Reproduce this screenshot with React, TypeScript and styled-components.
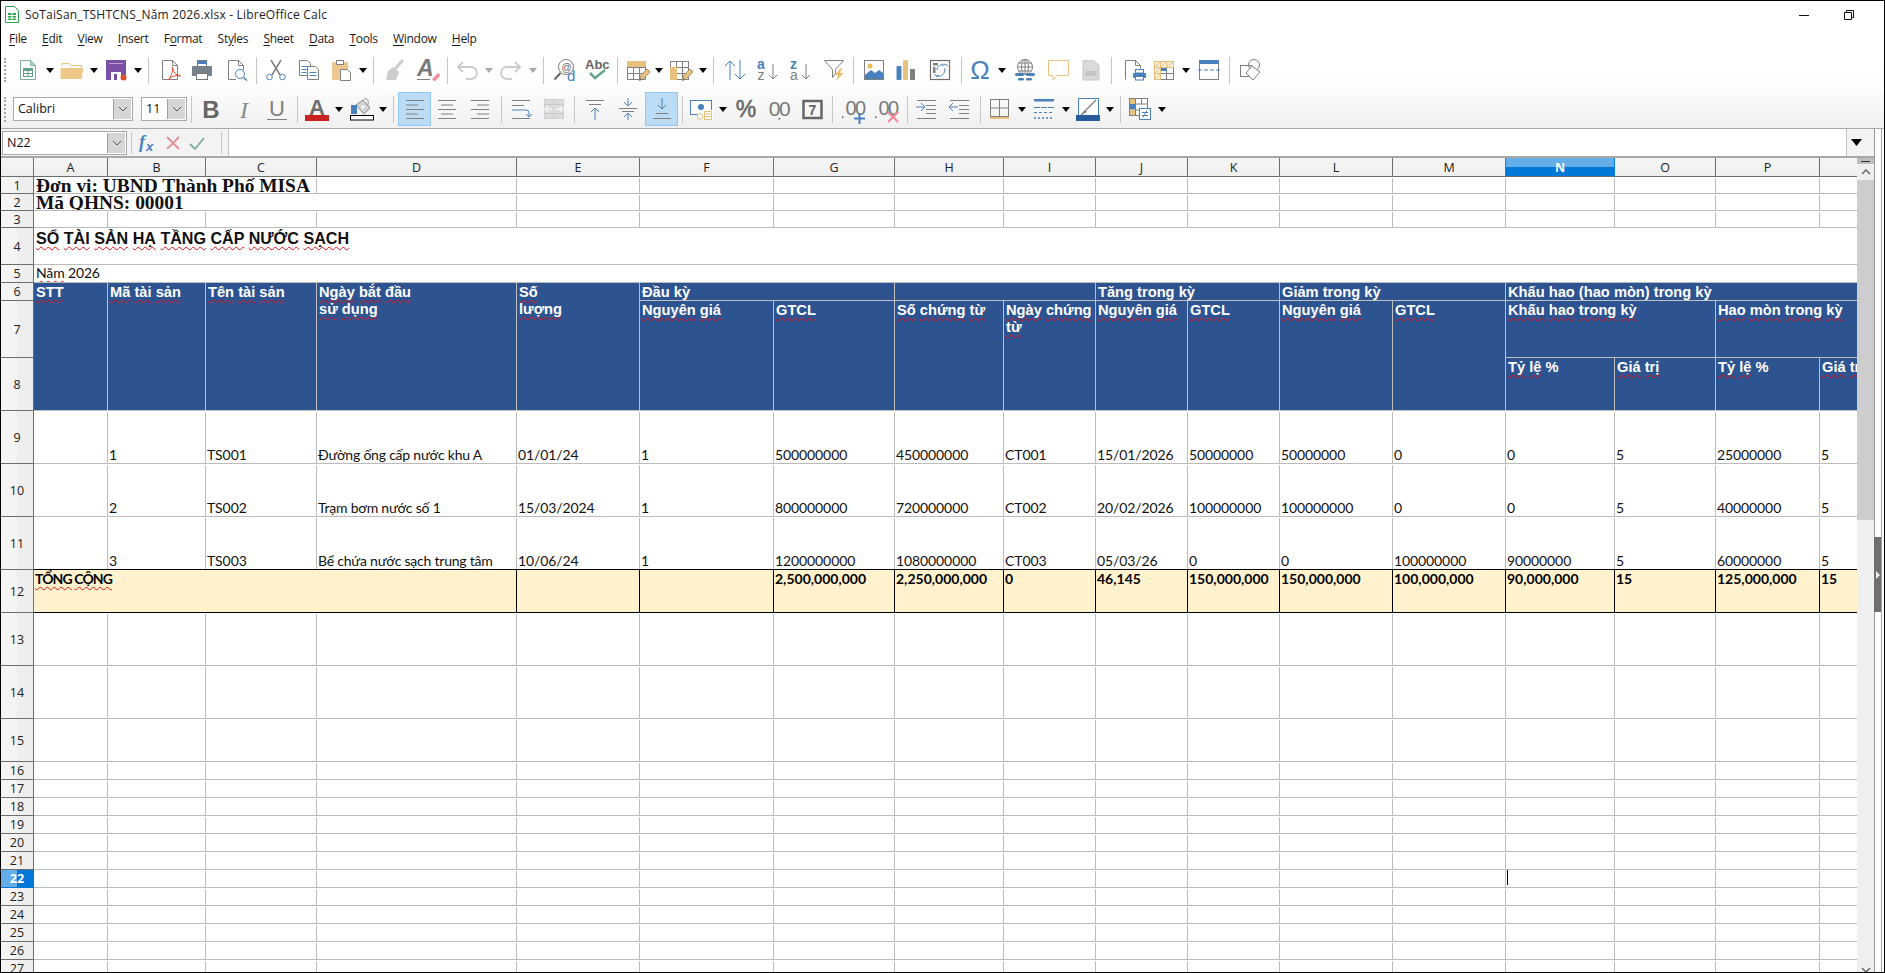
import React from 'react';
import styled, { createGlobalStyle } from 'styled-components';

const GlobalStyle = createGlobalStyle`
  html, body { margin: 0; padding: 0; background: #fff; overflow: hidden; }
  svg text { font-family: "Liberation Sans", Arial, sans-serif; }
`;

const UI = `"Open Sans", "Noto Sans", sans-serif`;
const DATA = `"Lato", "Liberation Sans", sans-serif`;

const Window = styled.div`
  width: 1885px; height: 973px; box-sizing: border-box; border: 1px solid #000;
  display: flex; flex-direction: column; overflow: hidden; background: #fff; color: #000;
`;
const TitleBar = styled.div`
  height: 27px; flex: none; display: flex; align-items: center; padding-left: 4px; gap: 6px;
  font: 12px ${UI}; color: #222;
`;
const TitleText = styled.span`flex: 1; letter-spacing: 0.2px;`;
const WinBtn = styled.span<{ $w: number }>`width: ${p => p.$w}px; display: flex; justify-content: center; align-items: center;`;
const MenuBar = styled.div`
  height: 22px; flex: none; display: flex; align-items: center; gap: 15.3px; padding-left: 8px;
  font: 12px ${UI}; color: #1a1a1a; padding-bottom: 2px; box-sizing: border-box; letter-spacing: -0.3px;
`;
const MenuItem = styled.span`u { text-underline-offset: 2px; }`;
const Dock = styled.div`
  flex: none; border-bottom: 1px solid #a8a8a8;
  background: linear-gradient(#fff 0%, #fefefe 45%, #f0f0f0 100%);
`;
const ToolRow = styled.div<{ $h: number }>`height: ${p => p.$h}px; display: flex; align-items: center;`;
const Slot = styled.div<{ $gap: number; $w: number }>`
  flex: none; margin-left: ${p => p.$gap}px; width: ${p => p.$w}px;
  display: flex; align-items: center; justify-content: center;
  svg { display: block; overflow: visible; flex: none; }
`;
const Grip = styled.div<{ $h: number }>`width: 0; height: ${p => p.$h}px; border-left: 2px dotted #a5a5a5;`;
const Sep = styled.div`width: 1px; height: 27px; background: #c6c6c6;`;
const Arrow = styled.div<{ $off?: boolean }>`
  width: 0; height: 0; border-left: 4.5px solid transparent; border-right: 4.5px solid transparent;
  border-top: 5px solid ${p => (p.$off ? '#aaa' : '#000')};
`;
const Active = styled.div`
  width: 33px; height: 34px; box-sizing: border-box; background: #bcdcf5; border: 1px solid #92c8f4;
  display: flex; align-items: center; justify-content: center;
`;
const Combo = styled.div<{ $w: number; $h?: number }>`
  width: ${p => p.$w}px; height: ${p => p.$h ?? 24}px; box-sizing: border-box; border: 1px solid #a8a8a8; background: #fff;
  display: flex; align-items: stretch; font: 12.5px ${UI}; color: #111;
`;
const ComboText = styled.span`flex: 1; padding-left: 4px; line-height: 22px;`;
const ComboBtn = styled.span`
  width: 18px; flex: none; background: #d6d6d6; border-left: 1px solid #a0a0a0; box-sizing: border-box;
  display: flex; align-items: center; justify-content: center; margin: 1px 1px 1px 0;
`;

const Body = styled.div`flex: 1; min-height: 0; display: flex;`;
const MainCol = styled.div`width: 1873px; flex: none; display: flex; flex-direction: column; min-height: 0;`;
const FormulaBar = styled.div`
  height: 29px; flex: none; box-sizing: border-box; border-bottom: 2px solid #a8a8a8; display: flex; align-items: stretch;
`;
const FormulaTools = styled.div`
  width: 228px; flex: none; box-sizing: border-box; background: #f3f3f3; border-right: 1px solid #c4c4c4;
  display: flex; align-items: center; padding-left: 1px;
`;
const FxIcons = styled.div`display: flex; align-items: center; margin-left: 7px; gap: 8px; svg { display: block; }`;
const FxSep = styled.div<{ $l: number }>`width: 1px; height: 22px; background: #c6c6c6; margin-left: ${p => p.$l}px;`;
const FormulaInput = styled.div`flex: 1; background: #fff;`;
const FormulaDrop = styled.div`
  width: 28px; flex: none; box-sizing: border-box; background: #f3f3f3; border-left: 1px solid #c4c4c4;
  display: flex; align-items: center; justify-content: center; padding-right: 8px;
`;
const SheetRow = styled.div`flex: 1; min-height: 0; display: flex;`;
const SheetView = styled.div`width: 1856px; flex: none; overflow: hidden;`;
const Grid = styled.div`
  display: grid;
  grid-template-columns: 33px 74px 98px 111px 200px 123px 134px 121px 109px 92px 92px 92px 113px 113px 109px 101px 104px 100px;
  grid-template-rows: 19px 17px 17px 17px 37px 18px 18px 57px 53px 53px 53px 53px 43px 53px 53px 43px repeat(12, 18px);
`;
const HeadCell = styled.div<{ $on?: boolean }>`
  box-sizing: border-box; border-right: 1px solid ${p => (p.$on ? '#0078d7' : '#6e6e6e')}; border-bottom: 1px solid #6e6e6e;
  display: flex; align-items: center; justify-content: center; font: ${p => (p.$on ? 700 : 400)} 12.5px ${UI};
  color: ${p => (p.$on ? '#fff' : '#222')}; padding-top: 1px;
  background: ${p => (p.$on ? 'linear-gradient(#63ade8 0 50%, #0078d7 50% 100%)' : 'linear-gradient(#f6f6f6, #eeeeee)')};
`;
const RowHead = styled.div<{ $on?: boolean }>`
  box-sizing: border-box; border-right: 1px solid ${p => (p.$on ? '#0078d7' : '#6e6e6e')}; border-bottom: 1px solid ${p => (p.$on ? '#0078d7' : '#6e6e6e')};
  display: flex; align-items: center; justify-content: center; font: ${p => (p.$on ? 700 : 400)} 12.5px ${UI};
  color: ${p => (p.$on ? '#fff' : '#222')};
  background: ${p => (p.$on ? 'linear-gradient(90deg, #63ade8 0 50%, #0078d7 50% 100%)' : 'linear-gradient(90deg, #f4f4f4 0 50%, #eeeeee 50% 100%)')};
`;
const Cell = styled.div<{ $col?: number; $row?: number; $span?: number; $rows?: number; $end?: boolean; $black?: boolean }>`
  box-sizing: border-box; min-width: 0; overflow: hidden; padding: 0 0 0 1px; white-space: nowrap;
  ${p => (p.$col ? `grid-column: ${p.$col} / span ${p.$span ?? 1};` : '')}
  ${p => (p.$row ? `grid-row: ${p.$row} / span ${p.$rows ?? 1};` : '')}
  border-bottom: 1px solid ${p => (p.$black ? '#000' : '#bcbcbc')};
  background: linear-gradient(#bcbcbc, #bcbcbc) right bottom / 1px calc(100% - 1px) no-repeat;
  font: 400 14px/17px ${DATA}; color: #111; letter-spacing: -0.1px;
  display: flex; flex-direction: column; justify-content: ${p => (p.$end ? 'flex-end' : 'flex-start')};
`;
const YearCell = styled(Cell)`padding: 0 0 1px 2px; letter-spacing: -0.15px;`;
const BannerCell = styled(Cell)`
  font: 700 19.4px/18px "Liberation Serif", "Times New Roman", serif; padding-left: 2px; letter-spacing: 0;
`;
const TitleCell = styled(Cell)`
  font: 700 16.1px/20px "Liberation Sans", Arial, sans-serif; letter-spacing: 0; padding: 0 0 0 2px;
`;
const NavyCell = styled.div<{ $col: number; $row: number; $span?: number; $rows?: number }>`
  box-sizing: border-box; min-width: 0; overflow: hidden; padding: 1px 0 0 2px;
  grid-column: ${p => p.$col} / span ${p => p.$span ?? 1}; grid-row: ${p => p.$row} / span ${p => p.$rows ?? 1};
  background: #2d5391; border-right: 1px solid #c0c0c0; border-bottom: 1px solid #c0c0c0;
  color: #fff; font: 700 14.67px/17px "Liberation Sans", Arial, sans-serif;
`;
const NavyLine = styled.div`white-space: nowrap;`;
const TotalCell = styled.div<{ $col: number; $span?: number }>`
  grid-column: ${p => p.$col} / span ${p => p.$span ?? 1}; grid-row: 13;
  box-sizing: border-box; min-width: 0; overflow: hidden; white-space: nowrap; padding-left: 1px;
  background: #fff2cc; border-right: 1px solid #000; border-bottom: 1px solid #000;
  font: 700 14px/17px ${DATA}; color: #000;
`;
const Tight = styled.span<{ $track: number }>`letter-spacing: ${p => p.$track}px;`;
const Wavy = styled.span`
  text-decoration: underline wavy #e0141c 1px; text-underline-offset: 2px; text-decoration-skip-ink: none;
`;
const Caret = styled.span`display: block; width: 1px; height: 15px; background: #000; margin: 0;`;

const ScrollBar = styled.div`width: 17px; flex: none; background: #f0f0f0; display: flex; flex-direction: column;`;
const ScrollHandle = styled.div`height: 6px; flex: none; background: #bdbdbd; display: flex; align-items: center; justify-content: center;`;
const ScrollDash = styled.span`width: 9px; height: 1px; background: #333;`;
const ScrollUp = styled.div`height: 16px; flex: none; display: flex; align-items: center; justify-content: center;`;
const ScrollThumb = styled.div`height: 340px; flex: none; background: #cdcdcd;`;
const ScrollTrack = styled.div`flex: 1;`;
const ScrollDown = styled.div`height: 5px; flex: none; display: flex; justify-content: center; overflow: hidden;`;
const Strip = styled.div`
  flex: 1; box-sizing: border-box; border-left: 1px solid #9a9a9a; position: relative;
  background: linear-gradient(#a8a8a8, #a8a8a8) 6px 0 / 1px 100% no-repeat;
`;
const StripHandle = styled.div`
  position: absolute; left: -1px; top: 408px; width: 7px; height: 75px; background: #6e6e6e;
  display: flex; align-items: center; justify-content: center;
`;
const StripArrow = styled.span`
  width: 0; height: 0; border-left: 4px solid #eee; border-top: 4px solid transparent; border-bottom: 4px solid transparent;
`;

const G = '#808080', B = '#4a81bd', O = '#e9c17f', L = '#cdcdcd';
const S: React.FC<{ children: React.ReactNode }> = ({ children }) => (
  <svg width="24" height="24" viewBox="0 0 24 24" fill="none" strokeWidth="1">{children}</svg>
);
const hl = (y: number, x: number, w: number, c = G, h = 1) => <rect key={`${y}-${x}`} x={x} y={y} width={w} height={h} fill={c} />;
const pencil = <><path d="M13.5 22.5l1-5 6.5-6.5 3 3-6.5 6.5z" fill={O} stroke="#a98f68" /><path d="M13.5 22.5l1-2.5 1.5 1.5z" fill="#666" /></>;
const table = (
  <>
    <rect x="1.5" y="3.5" width="18" height="18" fill="#fff" stroke={G} />
    {[9.5, 15.5].map(y => <path key={y} d={`M1.5 ${y}h18`} stroke={G} />)}
    {[7.5, 13.5].map(x => <path key={x} d={`M${x} 3.5v18`} stroke={G} />)}
  </>
);

const icons: Record<string, React.ReactNode> = {
  new: <S><path d="M4.5 2.5h10l5 5v14h-15z" fill="#fff" stroke="#7fb09b" /><path d="M14.5 2.5v5h5z" fill="#b9d5c9" stroke="#7fb09b" /><rect x="7.5" y="10.5" width="9" height="8" fill="#fff" stroke="#62a088" /><rect x="7" y="10" width="10" height="3" fill="#62a088" /><path d="M12 13v5M8 15.5h8" stroke="#62a088" /></S>,
  open: <S><path d="M2 8V5.5h7l2 2h10.5V10" stroke={O} /><path d="M.5 10h23l-2 11H.5z" fill="#efc789" /></S>,
  save: <S><rect x="2" y="2" width="20" height="20" fill="#7b4fa6" /><rect x="5" y="5" width="14" height="1" fill="#b9a1d3" /><rect x="7" y="14" width="10" height="8" fill="#fff" /><rect x="10" y="16" width="3" height="6" fill="#7b4fa6" /><circle cx="19.5" cy="19.5" r="3" fill="#e0502f" /></S>,
  pdf: <S><path d="M3.5 2.5h10l5 5v14h-15z" fill="#fff" stroke={G} /><path d="M13.5 2.5v5h5" stroke={G} /><path d="M9 22c3-3 5-8 4.500-13 .5 5 3 8 8 9-5-1-9 0-12.500 4z" stroke="#e0472e" /></S>,
  print: <S><rect x="7.500" y="2.500" width="9" height="7" fill="#fff" stroke="#777" /><rect x="7" y="3" width="10" height="3" fill={B} /><rect x="2" y="8" width="20" height="10" rx="1" fill="#77818c" /><rect x="6.500" y="15.500" width="11" height="6" fill="#fff" stroke="#777" /></S>,
  preview: <S><path d="M3.500 2.500h10l5 5v5M11 21.500H3.500v-19" stroke={G} fill="#fff" /><path d="M13.500 2.500v5h5" stroke={G} /><circle cx="15" cy="16" r="4.500" stroke={B} fill="#fff" /><path d="M18.500 19.500l3.500 3" stroke={B} strokeWidth="1.500" /></S>,
  cut: <S><path d="M7 2l9 15M17 2L8 17" stroke={G} strokeWidth="1.500" /><circle cx="5.500" cy="19" r="2.800" stroke={B} /><circle cx="18.500" cy="19" r="2.800" stroke={B} /></S>,
  copy: <S><path d="M2.500 2.500h8l3 3v12h-11z" fill="#fff" stroke={G} /><path d="M4.500 8.500h6M4.500 11.500h6M4.500 14.500h5" stroke={B} /><path d="M10.500 8.500h8l3 3v10h-11z" fill="#fff" stroke={G} /><path d="M12.500 14.500h7M12.500 17.500h7" stroke={B} /></S>,
  paste: <S><rect x="2" y="4" width="16" height="18" fill="#edc88e" /><rect x="6.500" y="2.500" width="7" height="4" fill="#fff" stroke={G} /><path d="M10.500 11.500h7l3 3v8h-10z" fill="#fff" stroke={G} /></S>,
  clone: <S><path d="M20 2l-8 9" stroke={L} strokeWidth="3" /><path d="M5 13l5-4 6 5-3 8H3z" fill={L} /></S>,
  clear: <S><text x="1" y="18" fontSize="23" fontStyle="italic" fontWeight="700" fill="#7a7a7a">A</text><path d="M16 21l6-6 2.500 2.500-6 6z" fill="#f08ea0" /><path d="M1 21.500h13" stroke={G} /></S>,
  undo: <S><path d="M3 9h13a5.500 5.500 0 0 1 0 12h-5M8 4L3 9l5 5" stroke={L} strokeWidth="1.800" /></S>,
  redo: <S><path d="M21 9H8a5.500 5.500 0 0 0 0 12h5M16 4l5 5-5 5" stroke={L} strokeWidth="1.800" /></S>,
  find: <S><circle cx="13" cy="9" r="7.500" stroke={G} /><path d="M7.500 15L1.500 21.500" stroke="#666" strokeWidth="2" /><text x="8.500" y="12.500" fontSize="10" fill="#666">@</text><text x="14" y="23" fontSize="15" fill={B}>d</text></S>,
  spell: <S><text x="0" y="11" fontSize="13" fontWeight="700" fill="#666">Abc</text><path d="M5 15l5 5 10-8" stroke="#67a58c" strokeWidth="2.500" /></S>,
  row: <S>{table}<rect x="1" y="3" width="19" height="6" fill={O} />{pencil}</S>,
  col: <S>{table}<rect x="1" y="9" width="7" height="13" fill={O} />{pencil}</S>,
  sort: <S><path d="M7 22V3M2 8l5-5 5 5M17 2v19M12 16l5 5 5-5" stroke={B} /></S>,
  asc: <S><text x="1" y="10.500" fontSize="14" fontWeight="700" fill={B}>a</text><text x="1.500" y="22" fontSize="14" fill={G}>z</text><path d="M17 6v15M13 17l4 4 4-4" stroke={G} /></S>,
  desc: <S><text x="1" y="10.500" fontSize="14" fontWeight="700" fill={B}>z</text><text x="1" y="22" fontSize="14" fill={G}>a</text><path d="M17 6v15M13 17l4 4 4-4" stroke={G} /></S>,
  filter: <S><path d="M2.500 2.500h19l-8 9v4l-3 4v-8z" stroke={G} fill="#fff" /><path d="M19 10l-6 7h3.500l-3 6 8-8h-4l3-5z" fill="#efb95c" /></S>,
  image: <S><rect x="2.500" y="2.500" width="19" height="19" stroke={G} fill="#fff" /><circle cx="8" cy="8" r="2.500" fill="#efb95c" /><path d="M3 21v-4l6-5 4 3 4-3 4 3v6z" fill={B} /></S>,
  chart: <S><rect x="2.500" y="8" width="5" height="14" rx="1" fill={B} /><rect x="9" y="2" width="5" height="20" rx="1" fill={O} /><rect x="16" y="11" width="5" height="11" fill={G} /></S>,
  pivot: <S><rect x="2.500" y="2.500" width="19" height="19" stroke="#6e6e6e" strokeWidth="1.200" /><path d="M5 5h5v2.500H5zM5 9h2.500v6H5z" fill={G} /><path d="M8 18c6 1 9-2 9-8M14 8l3-2 3 2M9 12c0-3 2-5 6-6M6.500 16l2 2.500 2.500-1.500" stroke={B} /></S>,
  omega: <S><text x="12" y="21" textAnchor="middle" fontSize="26" fill={B}>Ω</text></S>,
  link: <S><circle cx="12" cy="9" r="7.500" stroke={G} /><ellipse cx="12" cy="9" rx="3.500" ry="7.500" stroke={G} /><path d="M4.500 9h15M12 1.500V16M5.500 5h13M5.500 13h13" stroke={G} /><rect x="2" y="15" width="9" height="3" rx="1.500" fill={B} /><rect x="13" y="15" width="9" height="3" rx="1.500" fill={B} /><rect x="5" y="20" width="6" height="2.500" rx="1.200" fill={B} /><rect x="13" y="20" width="6" height="2.500" rx="1.200" fill={B} /></S>,
  comment: <S><path d="M2.500 2.500h20v15H11l-4 4.500v-4.500H2.500z" stroke={O} fill="#fff" /></S>,
  headers: <S><path d="M4 2.500h11l5 5v14.500H4z" fill="#d9d9d9" stroke="#cacaca" /><rect x="6.500" y="13" width="11" height="5" fill="#c4c4c4" /></S>,
  area: <S><path d="M3.500 21.500v-19h10l5 5v3" stroke={G} fill="#fff" /><path d="M13.500 2.500v5h5" stroke={G} /><rect x="11" y="15" width="13" height="5" rx="1" fill={B} /><rect x="13.500" y="11.500" width="8" height="3.500" fill="#fff" stroke={B} /><rect x="13.500" y="18.500" width="8" height="3.500" fill="#fff" stroke={B} /></S>,
  freeze: <S><rect x="2.500" y="3.500" width="19" height="18" stroke={G} fill="#fff" /><path d="M8.500 9.500h13M8.500 15.500h13M14.500 9.500v12" stroke={G} /><path d="M2.500 3.500h19v6h-13v12h-6z" fill="#fbeed7" stroke={O} /><path d="M2.500 9.500h6M2.500 15.500h6M8.500 3.500v6M15 3.500v6M3 9l5-5M9 9l5-5M15 9l6-5M3 15l5-5M3 21l5-5" stroke={O} /><rect x="9" y="10" width="6" height="3" fill={B} /></S>,
  split: <S><rect x="2.500" y="2.500" width="19" height="19" stroke={G} /><rect x="2" y="2" width="20" height="4" fill={B} /><path d="M1 12h22" stroke={B} strokeDasharray="4 2" /></S>,
  shapes: <S><rect x="2.500" y="7.500" width="11" height="11" stroke={G} /><circle cx="16" cy="7" r="5.500" stroke={G} /><path d="M14 8l8 6-7 8-7-7z" stroke={G} fill="#fff" /></S>,
  bold: <S><text x="12" y="21" textAnchor="middle" fontSize="24" fontWeight="700" fill="#666">B</text></S>,
  italic: <S><text x="12" y="21" textAnchor="middle" fontSize="24" fontStyle="italic" fill="#8a8a8a" style={{ fontFamily: '"Liberation Serif", serif' }}>I</text></S>,
  underline: <S><text x="12" y="19" textAnchor="middle" fontSize="22" fill="#808080">U</text><path d="M2 22.500h20" stroke="#808080" /></S>,
  fcolor: <S><text x="12" y="17.500" textAnchor="middle" fontSize="22" fontWeight="700" fill="#6e6e6e">A</text><rect x="0" y="18" width="24" height="6" fill="#c9211e" /></S>,
  bgcolor: <S><rect x="1.500" y="18.500" width="23" height="4.500" fill="#fff" stroke="#000" /><path d="M7 8l7-5 7 8-6 6z" fill="#d4d4d4" stroke="#888" /><rect x="2" y="8" width="6" height="9" fill={B} /><path d="M15 2c3-1 5 1 4 6" stroke="#888" /><circle cx="14" cy="10" r="1.500" fill="#fff" /></S>,
  left: <S>{[3, 7.500, 12, 16.500, 21].map((y, i) => hl(y, 3, i % 2 ? 12 : 18))}</S>,
  center: <S>{[3, 7.500, 12, 16.500, 21].map((y, i) => hl(y, i % 2 ? 6 : 3, i % 2 ? 12 : 18))}</S>,
  right: <S>{[3, 7.500, 12, 16.500, 21].map((y, i) => hl(y, i % 2 ? 9 : 3, i % 2 ? 12 : 18))}</S>,
  wrap: <S>{hl(3, 3, 18)}{hl(8, 3, 12)}{hl(21, 3, 18)}<path d="M3 13h14a3 3 0 0 1 3 3v3M17 17l3 3 3-3" stroke={B} /></S>,
  merge: <S><rect x="2.500" y="2.500" width="19" height="19" fill="#dcdcdc" stroke="#d0d0d0" /><path d="M2 7.500h20M2 16.500h20M12 2v5M12 17v5" stroke="#c8c8c8" /><path d="M3 12h7M6 9l-3 3 3 3M21 12h-7M18 9l3 3-3 3" stroke="#f5f5f5" strokeWidth="1.300" /></S>,
  vtop: <S>{hl(3, 3, 18)}{hl(7, 6, 12)}<path d="M12 23V11M8 15l4-4 4 4" stroke={B} /></S>,
  vcenter: <S>{hl(11, 3, 18)}{hl(14, 6, 12)}<path d="M12 1v8M8 5l4 4 4-4M12 23v-7M8 20l4-4 4 4" stroke={B} /></S>,
  vbottom: <S>{hl(16, 6, 12)}{hl(21, 3, 18)}<path d="M12 1v11M8 8l4 4 4-4" stroke={B} /></S>,
  currency: <S><rect x="1.500" y="3.500" width="21" height="14" fill="#fff" stroke={B} /><circle cx="12" cy="10" r="3" fill={B} /><rect x="12" y="13" width="12" height="10" fill="#fff" /><circle cx="11" cy="19.500" r="2.800" stroke={O} fill="#fff" /><rect x="15.500" y="14.500" width="7" height="8" stroke={O} fill="#fff" /><path d="M15.500 17h7M15.500 19.500h7" stroke={O} /></S>,
  percent: <S><text x="12" y="20" textAnchor="middle" fontSize="23" fill="#666" stroke="#666" strokeWidth=".5">%</text></S>,
  number: <S><text x="12" y="19" textAnchor="middle" fontSize="21" fill="#7a7a7a" letterSpacing="-1.500">00</text><rect x="11.500" y="21" width="1.500" height="1.500" fill="#555" /></S>,
  date: <S><rect x="3.500" y="4" width="18" height="17" stroke="#666" strokeWidth="2.500" /><text x="12.500" y="18" textAnchor="middle" fontSize="14" fontWeight="700" fill="#666">7</text></S>,
  addd: <S><text x="14" y="18" textAnchor="middle" fontSize="20" fill="#7a7a7a" letterSpacing="-1.500">00</text><rect x="1" y="19.500" width="1.500" height="1.500" fill="#555" /><path d="M13 21.500h11M18.500 16v11" stroke={B} strokeWidth="2" /></S>,
  deld: <S><text x="14" y="18" textAnchor="middle" fontSize="20" fill="#7a7a7a" letterSpacing="-1.500">00</text><rect x="1" y="19.500" width="1.500" height="1.500" fill="#555" /><path d="M14 15l10 10M24 15L14 25" stroke="#ef8a9c" strokeWidth="2.200" /></S>,
  indent: <S>{hl(3, 3, 19)}{hl(8, 12, 10)}{hl(12, 12, 10)}{hl(16, 12, 10)}{hl(21, 3, 19)}<path d="M2 10h8M7 6l4 4-4 4" stroke={B} /></S>,
  outdent: <S>{hl(3, 3, 19)}{hl(8, 12, 10)}{hl(12, 12, 10)}{hl(16, 12, 10)}{hl(21, 3, 19)}<path d="M11 10H3M6 6l-4 4 4 4" stroke={B} /></S>,
  borders: <S><rect x="2.500" y="2.500" width="18" height="17" stroke={G} /><path d="M2.500 11h18M11.500 2.500v17" stroke={G} /><rect x="2" y="20" width="19" height="2" fill={O} /></S>,
  bstyle: <S><rect x="2" y="2" width="20" height="2.500" fill={B} /><path d="M2 10.500h20" stroke={B} strokeDasharray="6 1" /><path d="M2 15.500h20" stroke={B} strokeDasharray="3 2" /><path d="M2 21h20" stroke={B} strokeWidth="1.500" strokeDasharray="2 2" /></S>,
  bcolor: <S><rect x="2.500" y="1.500" width="20" height="17" stroke={B} fill="#fff" /><path d="M5 18L20 3" stroke={G} strokeWidth="1.300" /><path d="M5 18l4-5 2 2z" fill={G} /><rect x="0" y="18" width="24" height="6" fill="#255c99" /></S>,
  cond: <S><rect x="1.500" y="1.500" width="18" height="17" fill="#fff" stroke={G} /><path d="M1.500 7h18M1.500 13h18M7.500 1.500v17M13.500 1.500v6" stroke={G} /><rect x="2" y="2" width="5" height="5" fill={O} /><rect x="2" y="7" width="5" height="5" fill={B} /><rect x="2" y="13" width="5" height="5" fill={O} /><rect x="11.500" y="11.500" width="11" height="11" fill="#fff" stroke={B} /><path d="M14 15.500h6M14 18.500h6M19 13.500l-4 7" stroke={B} /></S>,
};

type Item = [string, number];
const row1: Item[] = [['g', 5], ['new', 28], ['a', 50], ['open', 72], ['a', 94], ['save', 116], ['a', 138], ['s', 148], ['pdf', 170.5], ['print', 202], ['preview', 237], ['s', 256], ['cut', 276], ['copy', 309], ['paste', 342], ['a', 363], ['s', 373], ['clone', 395], ['clear', 428], ['s', 447], ['undo', 467], ['o', 489], ['redo', 511], ['o', 533], ['s', 543], ['find', 565], ['spell', 597], ['s', 617], ['row', 638], ['a', 659], ['col', 681], ['a', 703], ['s', 713], ['sort', 735], ['asc', 768], ['desc', 801], ['filter', 834], ['s', 853], ['image', 874], ['chart', 906], ['pivot', 940], ['s', 961], ['omega', 980], ['a', 1002], ['link', 1025], ['comment', 1058], ['headers', 1091], ['s', 1111], ['area', 1134], ['freeze', 1164], ['a', 1186], ['split', 1209], ['s', 1229], ['shapes', 1250]];
const row2: Item[] = [['g', 5], ['font', 73], ['size', 164], ['s', 191], ['bold', 211], ['italic', 244], ['underline', 277], ['s', 297], ['fcolor', 317], ['a', 339], ['bgcolor', 361], ['a', 383], ['s', 393], ['left*', 414.5], ['center', 447], ['right', 480], ['s', 501], ['wrap', 521], ['merge', 554], ['s', 574], ['vtop', 595], ['vcenter', 628], ['vbottom*', 661.5], ['s', 682], ['currency', 701], ['a', 723], ['percent', 746], ['number', 779], ['date', 812], ['s', 832], ['addd', 853], ['deld', 886], ['s', 907], ['indent', 926], ['outdent', 959], ['s', 980], ['borders', 1000], ['a', 1022], ['bstyle', 1044], ['a', 1066], ['bcolor', 1088], ['a', 1110], ['s', 1120], ['cond', 1140], ['a', 1162]];

const widthOf = (k: string) => {
  if (k === 'g') return 2;
  if (k === 's') return 1;
  if (k === 'a' || k === 'o') return 9;
  if (k === 'font') return 120;
  if (k === 'size') return 46;
  if (k.endsWith('*')) return 33;
  return 24;
};
const Chevron = () => (
  <svg width="10" height="6" viewBox="0 0 10 6" fill="none"><path d="M1 1l4 4 4-4" stroke="#555" /></svg>
);
const Tool: React.FC<{ k: string; h: number }> = ({ k, h }) => {
  if (k === 'g') return <Grip $h={h} />;
  if (k === 's') return <Sep />;
  if (k === 'a') return <Arrow />;
  if (k === 'o') return <Arrow $off />;
  if (k === 'font') return <Combo $w={120}><ComboText>Calibri</ComboText><ComboBtn><Chevron /></ComboBtn></Combo>;
  if (k === 'size') return <Combo $w={46}><ComboText>11</ComboText><ComboBtn><Chevron /></ComboBtn></Combo>;
  if (k.endsWith('*')) return <Active>{icons[k.slice(0, -1)]}</Active>;
  return <>{icons[k]}</>;
};
const Toolbar: React.FC<{ items: Item[]; h: number; grip: number }> = ({ items, h, grip }) => {
  let end = 1;
  return (
    <ToolRow $h={h}>
      {items.map(([k, c], i) => {
        const w = widthOf(k);
        const gap = c - w / 2 - end;
        end = c + w / 2;
        return <Slot key={i} $gap={gap} $w={w}><Tool k={k} h={grip} /></Slot>;
      })}
    </ToolRow>
  );
};

const Marked: React.FC<{ text: string }> = ({ text }) => (
  <>
    {text.split(' ').map((w, i) => (
      <React.Fragment key={i}>
        {i > 0 ? ' ' : ''}
        {/\p{L}/u.test(w) && w !== 'A' ? <Wavy>{w}</Wavy> : w}
      </React.Fragment>
    ))}
  </>
);

const menus: [string, string][] = [['F', 'ile'], ['E', 'dit'], ['V', 'iew'], ['I', 'nsert'], ['F|o', 'rmat'], ['St|y', 'les'], ['S', 'heet'], ['D', 'ata'], ['T', 'ools'], ['W', 'indow'], ['H', 'elp']];
const columns = 'ABCDEFGHIJKLMNOPQ'.split('');
const rowsData: { r: number; v: string[] }[] = [
  { r: 9, v: ['', '1', 'TS001', '*Đường ống cấp nước khu A', '01/01/24', '1', '500000000', '450000000', 'CT001', '15/01/2026', '50000000', '50000000', '0', '0', '5', '25000000', '5'] },
  { r: 10, v: ['', '2', 'TS002', '*Trạm bơm nước số 1', '15/03/2024', '1', '800000000', '720000000', 'CT002', '20/02/2026', '100000000', '100000000', '0', '0', '5', '40000000', '5'] },
  { r: 11, v: ['', '3', 'TS003', '*Bể chứa nước sạch trung tâm', '10/06/24', '1', '1200000000', '1080000000', 'CT003', '05/03/26', '0', '0', '100000000', '90000000', '5', '60000000', '5'] },
];
const totals = ['', '', '2,500,000,000', '2,250,000,000', '0', '46,145', '150,000,000', '150,000,000', '100,000,000', '90,000,000', '15', '125,000,000', '15'];
const plainRows = [3, 13, 14, 15, 16, 17, 18, 19, 20, 21, 22, 23, 24, 25, 26, 27];

type NavySpec = { c: number; r: number; s?: number; rs?: number; t?: string[] };
const navy: NavySpec[] = [
  { c: 2, r: 7, rs: 3, t: ['STT'] }, { c: 3, r: 7, rs: 3, t: ['Mã tài sản'] }, { c: 4, r: 7, rs: 3, t: ['Tên tài sản'] },
  { c: 5, r: 7, rs: 3, t: ['Ngày bắt đầu', 'sử dụng'] }, { c: 6, r: 7, rs: 3, t: ['Số', 'lượng'] },
  { c: 7, r: 7, s: 2, t: ['Đầu kỳ'] }, { c: 9, r: 7, s: 2 }, { c: 11, r: 7, s: 2, t: ['Tăng trong kỳ'] }, { c: 13, r: 7, s: 2, t: ['Giảm trong kỳ'] },
  { c: 15, r: 7, s: 4, t: ['Khấu hao (hao mòn) trong kỳ'] },
  { c: 7, r: 8, rs: 2, t: ['Nguyên giá'] }, { c: 8, r: 8, rs: 2, t: ['GTCL'] }, { c: 9, r: 8, rs: 2, t: ['Số chứng từ'] }, { c: 10, r: 8, rs: 2, t: ['Ngày chứng', 'từ'] },
  { c: 11, r: 8, rs: 2, t: ['Nguyên giá'] }, { c: 12, r: 8, rs: 2, t: ['GTCL'] }, { c: 13, r: 8, rs: 2, t: ['Nguyên giá'] }, { c: 14, r: 8, rs: 2, t: ['GTCL'] },
  { c: 15, r: 8, s: 2, t: ['Khấu hao trong kỳ'] }, { c: 17, r: 8, s: 2, t: ['Hao mòn trong kỳ'] },
  { c: 15, r: 9, t: ['Tỷ lệ %'] }, { c: 16, r: 9, t: ['Giá trị'] }, { c: 17, r: 9, t: ['Tỷ lệ %'] }, { c: 18, r: 9, t: ['Giá trị'] },
];

export default function App() {
  return (
    <>
      <GlobalStyle />
      <Window>
        <TitleBar>
          <svg width="14" height="17" viewBox="0 0 14 17" fill="none">
            <path d="M.5.500h9l4 4v12H.500z" fill="#fff" stroke="#2ea44f" />
            <rect x="3" y="7" width="8" height="7" fill="#2ea44f" />
            <path d="M3 9.500h8M3 12h8M7 7v7" stroke="#fff" />
          </svg>
          <TitleText>SoTaiSan_TSHTCNS_Năm 2026.xlsx - LibreOffice Calc</TitleText>
          <WinBtn $w={40}>
            <svg width="10" height="10" viewBox="0 0 10 10"><path d="M0 5.500h10" stroke="#111" /></svg>
          </WinBtn>
          <WinBtn $w={38}>
            <svg width="10" height="10" viewBox="0 0 10 10" fill="none"><path d="M2.500 2.500V.500h7v7h-2M.500 2.500h7v7h-7z" stroke="#111" /></svg>
          </WinBtn>
          <WinBtn $w={10} />
        </TitleBar>
        <MenuBar>
          {menus.map(([a, b]) => {
            const [pre, mark] = a.includes('|') ? a.split('|') : ['', a];
            return <MenuItem key={a + b}>{pre}<u>{mark}</u>{b}</MenuItem>;
          })}
        </MenuBar>
        <Dock>
          <Toolbar items={row1} h={40} grip={24} />
          <Toolbar items={row2} h={38} grip={25} />
        </Dock>
        <Body>
          <MainCol>
            <FormulaBar>
              <FormulaTools>
                <Combo $w={125} $h={24}><ComboText>N22</ComboText><ComboBtn><Chevron /></ComboBtn></Combo>
                <FxSep $l={4} />
                <FxIcons>
                  <svg width="18" height="20" viewBox="0 0 18 20"><text x="0" y="15" fontSize="18" fontStyle="italic" fontWeight="700" fill="#4a81bd" style={{ fontFamily: '"Liberation Serif", serif' }}>f</text><text x="7" y="18" fontSize="13" fontStyle="italic" fontWeight="700" fill="#4a81bd">x</text></svg>
                  <svg width="16" height="16" viewBox="0 0 16 16" fill="none"><path d="M2 2l12 12M14 2L2 14" stroke="#e68f9c" strokeWidth="1.800" /></svg>
                  <svg width="16" height="16" viewBox="0 0 16 16" fill="none"><path d="M1 9l5 5 9-11" stroke="#79ad9a" strokeWidth="1.800" /></svg>
                </FxIcons>
                <FxSep $l={16} />
              </FormulaTools>
              <FormulaInput />
              <FormulaDrop>
                <svg width="11" height="7" viewBox="0 0 11 7"><path d="M0 0h11L5.500 7z" fill="#000" /></svg>
              </FormulaDrop>
            </FormulaBar>
            <SheetRow>
              <SheetView>
                <Grid>
                  <HeadCell />
                  {columns.map(c => <HeadCell key={c} $on={c === 'N'}>{c}</HeadCell>)}
                  {Array.from({ length: 27 }, (_, i) => (
                    <RowHead key={i} $on={i + 1 === 22} style={{ gridColumn: 1, gridRow: i + 2 }}>{i + 1}</RowHead>
                  ))}

                  <BannerCell $col={2} $row={2} $span={3}><div><Wavy>Đơn</Wavy> <Wavy>vị:</Wavy> UBND <Wavy>Thành</Wavy> <Wavy>Phố</Wavy> MISA</div></BannerCell>
                  {[5, 6, 7, 8, 9, 10, 11, 12, 13, 14, 15, 16, 17, 18].map(c => <Cell key={c} $col={c} $row={2} />)}
                  <BannerCell $col={2} $row={3} $span={4}><div><Wavy>Mã</Wavy> <Wavy>QHNS:</Wavy> 00001</div></BannerCell>
                  {[6, 7, 8, 9, 10, 11, 12, 13, 14, 15, 16, 17, 18].map(c => <Cell key={c} $col={c} $row={3} />)}
                  <TitleCell $col={2} $row={5} $span={17}><div><Marked text="SỔ TÀI SẢN HẠ TẦNG CẤP NƯỚC SẠCH" /></div></TitleCell>
                  <YearCell $col={2} $row={6} $span={17} $end><div><Wavy>Năm</Wavy> 2026</div></YearCell>

                  {navy.map(n => (
                    <NavyCell key={`${n.c}-${n.r}`} $col={n.c} $row={n.r} $span={n.s} $rows={n.rs}>
                      {(n.t ?? []).map(t => <NavyLine key={t}><Marked text={t} /></NavyLine>)}
                    </NavyCell>
                  ))}

                  {rowsData.flatMap(({ r, v }) =>
                    v.map((t, i) => (
                      <Cell key={`${r}-${i}`} $col={i + 2} $row={r + 1} $end $black={r === 11}>
                        <div>{t.startsWith('*') ? <Tight $track={-0.22}><Marked text={t.slice(1)} /></Tight> : t}</div>
                      </Cell>
                    ))
                  )}

                  <TotalCell $col={2} $span={4}><Tight $track={-0.9}><Marked text="TỔNG CỘNG" /></Tight></TotalCell>
                  {totals.map((t, i) => <TotalCell key={i} $col={i + 6}>{t}</TotalCell>)}

                  {plainRows.flatMap(r =>
                    columns.map((c, i) => (
                      <Cell key={`${r}${c}`} $col={i + 2} $row={r + 1}>
                        {r === 22 && c === 'N' ? <Caret /> : null}
                      </Cell>
                    ))
                  )}
                </Grid>
              </SheetView>
              <ScrollBar>
                <ScrollHandle><ScrollDash /></ScrollHandle>
                <ScrollUp>
                  <svg width="10" height="6" viewBox="0 0 10 6" fill="none"><path d="M1 5l4-4 4 4" stroke="#666" strokeWidth="1.500" /></svg>
                </ScrollUp>
                <ScrollThumb />
                <ScrollTrack />
                <ScrollDown>
                  <svg width="10" height="6" viewBox="0 0 10 6" fill="none"><path d="M1 1l4 4 4-4" stroke="#666" strokeWidth="1.500" /></svg>
                </ScrollDown>
              </ScrollBar>
            </SheetRow>
          </MainCol>
          <Strip>
            <StripHandle><StripArrow /></StripHandle>
          </Strip>
        </Body>
      </Window>
    </>
  );
}
